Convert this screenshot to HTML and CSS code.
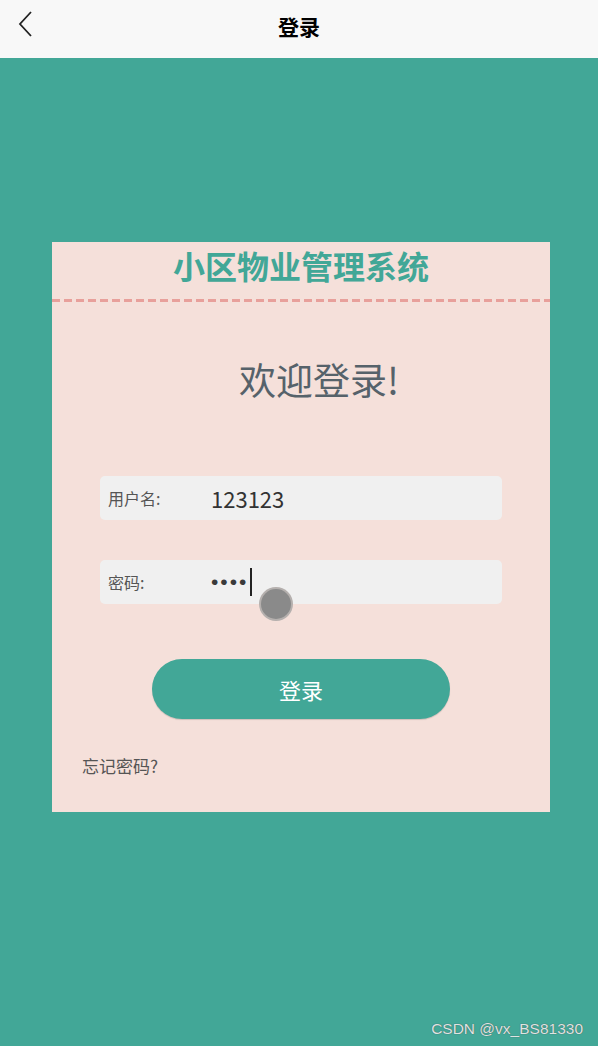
FILE: index.html
```html
<!DOCTYPE html>
<html>

<head>
  <title>登录</title>
  <link rel="stylesheet" href="styles.css">
</head>

<body>
  <div class="topbar">
    <span class="back">
      <svg width="16" height="26" viewBox="0 0 16 26"><path d="M14 1 L3 13 L14 25" fill="none" stroke="#222" stroke-width="1.8"/></svg>
    </span>
    <h1 class="topbar-title">登录</h1>
  </div>

  <div class="page">
    <div class="card">
      <div class="card-title">小区物业管理系统</div>
      <div class="dash"></div>
      <div class="welcome">欢迎登录!</div>
      <form class="login-form">
        <div class="field">
          <label for="username">用户名:</label>
          <span class="value">123123</span>
        </div>
        <div class="field">
          <label for="password">密码:</label>
          <span class="value dots">••••</span><span class="caret"></span>
          <span class="touch"></span>
        </div>
        <div class="btn-row">
          <button type="button" class="login-btn">登录</button>
        </div>
      </form>
      <div class="forgot">忘记密码?</div>
    </div>
  </div>

  <div class="watermark">CSDN @vx_BS81330</div>
</body>

</html>
```

FILE: styles.css
```css
html, body {
  margin: 0;
  padding: 0;
}
body {
  width: 598px;
  height: 1046px;
  background-color: #42a797;
  font-family: "Noto Sans CJK SC", "Noto Sans", sans-serif;
  position: relative;
  overflow: hidden;
}
.topbar {
  height: 58px;
  background-color: #f8f8f8;
  display: flex;
  align-items: center;
  justify-content: center;
  position: relative;
}
.back {
  position: absolute;
  left: 17px;
  top: 11px;
}
.topbar-title {
  margin: 0 0 6px 0;
  font-size: 21px;
  font-weight: bold;
  color: #000;
}
.page {
  padding-top: 184px;
  padding-left: 52px;
}
.card {
  width: 498px;
  background-color: #f5e0da;
  padding-bottom: 34px;
}
.card-title {
  text-align: center;
  font-size: 32px;
  font-weight: bold;
  color: #42a797;
  line-height: 46px;
  padding-bottom: 11px;
}
.dash {
  height: 3px;
  background: repeating-linear-gradient(to right, #e8a09b 0 8px, transparent 8px 12px);
}
.welcome {
  text-align: center;
  padding-left: 36px;
  font-size: 37px;
  color: #56626a;
  line-height: 50px;
  margin-top: 52px;
}
.login-form {
  margin-top: 72px;
  padding: 0 48px;
}
.field {
  height: 44px;
  background-color: #f0f0f0;
  border-radius: 5px;
  display: flex;
  align-items: center;
  margin-bottom: 40px;
  position: relative;
}
.field label {
  width: 103px;
  padding-left: 8px;
  font-size: 16px;
  color: #555;
}
.value {
  font-size: 22px;
  color: #333;
}
.dots {
  font-family: "Liberation Sans", sans-serif;
  font-size: 21px;
  line-height: 26px;
  color: #3a3a3a;
  letter-spacing: 2px;
}
.caret {
  display: inline-block;
  width: 2px;
  height: 28px;
  background-color: #222;
  margin-left: 2px;
}
.touch {
  position: absolute;
  left: 161px;
  top: 29px;
  width: 30px;
  height: 30px;
  border-radius: 50%;
  background-color: #8a8a8a;
  box-shadow: 0 0 0 2px #b5b0ae;
}
.btn-row {
  display: flex;
  justify-content: center;
  margin-top: 55px;
}
.login-btn {
  width: 298px;
  height: 60px;
  border: none;
  border-radius: 30px;
  background-color: #42a797;
  color: #fff;
  font-family: "Noto Sans CJK SC", sans-serif;
  font-size: 22px;
  box-shadow: 0 1px 1px rgba(0, 0, 0, 0.15);
}
.forgot {
  margin-top: 34px;
  padding-left: 30px;
  font-size: 17px;
  color: #555;
}
.watermark {
  position: absolute;
  right: 15px;
  bottom: 8px;
  font-family: "Liberation Sans", Arial, sans-serif;
  font-size: 15.5px;
  color: #dde4e2;
  text-shadow: 0 0 1px #444;
}
```
